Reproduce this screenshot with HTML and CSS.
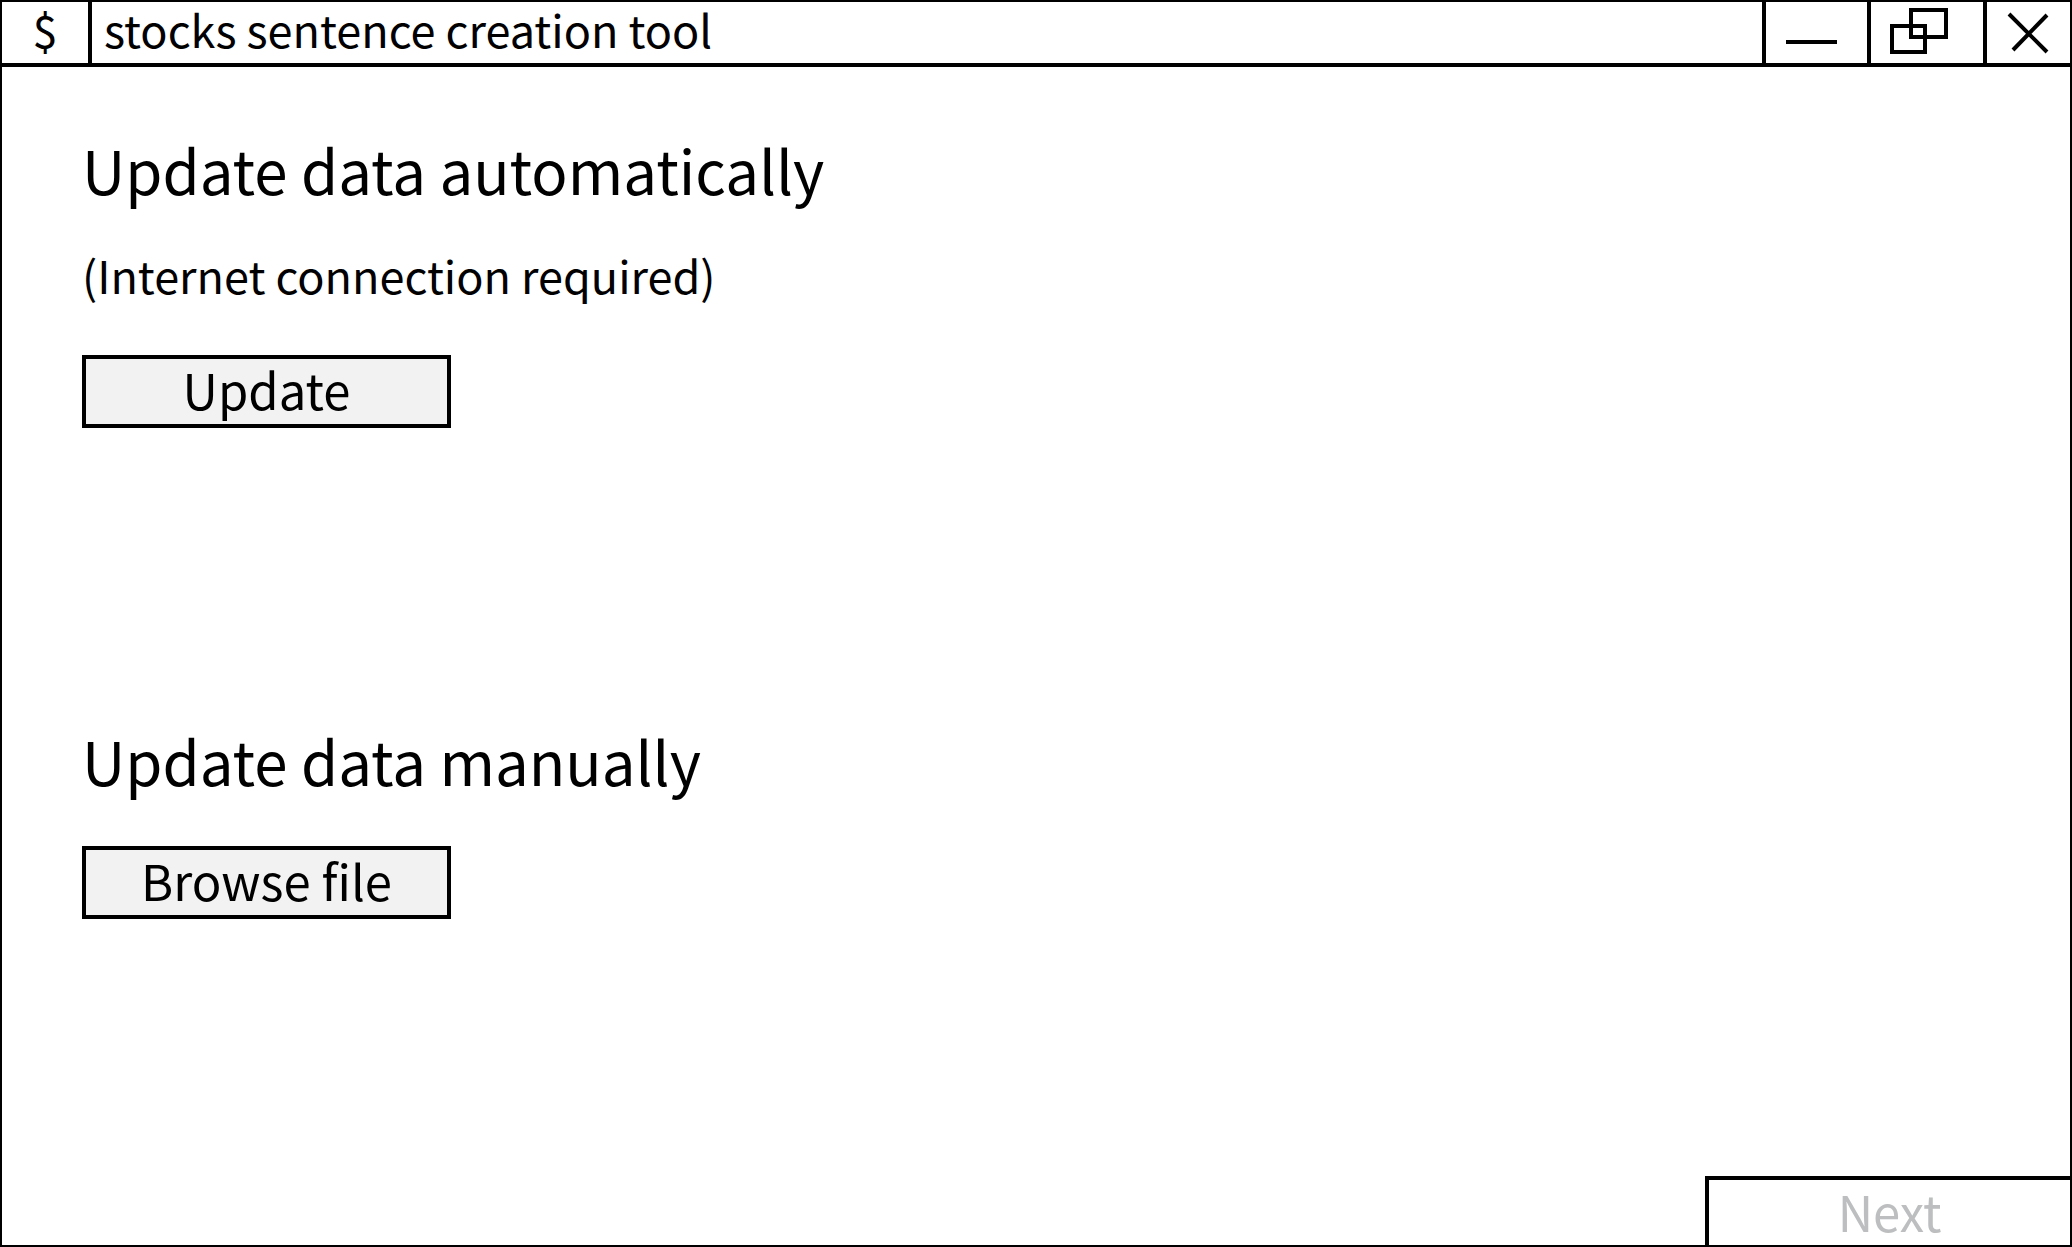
FILE: index.html
```html
<!DOCTYPE html>
<html lang="en">
<head>
<meta charset="utf-8">
<meta name="viewport" content="width=device-width, initial-scale=1">
<title>stocks sentence creation tool</title>
<link rel="stylesheet" href="styles.css">
</head>
<body>
<div class="window">
  <header class="titlebar">
    <span class="app-icon">$</span>
    <h1 class="app-title">stocks sentence creation tool</h1>
    <button class="control minimize" type="button" aria-label="Minimize">
      <svg width="52" height="60" viewBox="0 0 52 60"><path d="M0 40H51" /></svg>
    </button>
    <button class="control restore" type="button" aria-label="Restore">
      <svg width="58" height="60" viewBox="0 0 58 60"><path d="M21 8H56V35H21ZM2 24H35V50H2Z" /></svg>
    </button>
    <button class="control close" type="button" aria-label="Close">
      <svg width="42" height="60" viewBox="0 0 42 60"><path d="M2 12L40 50M40 13L6 48" /></svg>
    </button>
  </header>
  <main class="content">
    <section class="option">
      <h2 class="heading">Update data automatically</h2>
      <p class="note">(Internet connection required)</p>
      <button class="action" type="button">Update</button>
    </section>
    <section class="option">
      <h2 class="heading">Update data manually</h2>
      <button class="action" type="button">Browse file</button>
    </section>
  </main>
  <footer class="footer">
    <button class="action next" type="button" disabled>Next</button>
  </footer>
</div>
</body>
</html>
```
FILE: styles.css
```css
* {
  box-sizing: border-box;
}

body {
  margin: 0;
  background: #fff;
  color: #000;
  font-family: "Noto Sans CJK SC", "Noto Sans", sans-serif;
}

h1, h2, p {
  margin: 0;
  font-weight: 400;
}

button {
  margin: 0;
  padding: 0;
  border: 0 solid #000;
  border-radius: 0;
  background: none;
  color: inherit;
  font-family: inherit;
}

.window {
  display: flex;
  flex-direction: column;
  min-height: 100vh;
  border: 2px solid #000;
}

.titlebar {
  display: flex;
  min-height: 65px;
  border-bottom: 4px solid #000;
  font-size: 45px;
  line-height: 54px;
}

.app-icon {
  width: 90px;
  border-right: 4px solid #000;
  text-align: center;
}

.app-title {
  flex: 1;
  padding-left: 12px;
  font-size: 45px;
}

.control {
  display: flex;
  justify-content: center;
  border-left-width: 4px;
}

.control svg {
  fill: none;
  stroke: #000;
  stroke-width: 4;
}

.minimize {
  width: 105px;
  padding-right: 10px;
}

.restore {
  width: 116px;
  padding-right: 16px;
}

.close {
  width: 87px;
  padding-right: 2px;
}

.content {
  display: flex;
  flex: 1;
  flex-direction: column;
  gap: 292px;
  padding: 62px 80px;
}

.heading {
  font-size: 60px;
  line-height: 80px;
}

.note {
  margin: 36px 0 50px;
  font-size: 45px;
  line-height: 60px;
}

.action {
  display: block;
  width: 369px;
  height: 73px;
  margin-top: 46px;
  padding-bottom: 6px;
  border-width: 4px;
  background: #f2f2f2;
  font-size: 49px;
  line-height: 56px;
}

.footer {
  display: flex;
  justify-content: flex-end;
}

.next {
  width: 365px;
  height: 69px;
  margin-top: 0;
  padding-bottom: 4px;
  border-width: 4px 0 0 4px;
  background: #fff;
  color: #bcbec0;
}
```
